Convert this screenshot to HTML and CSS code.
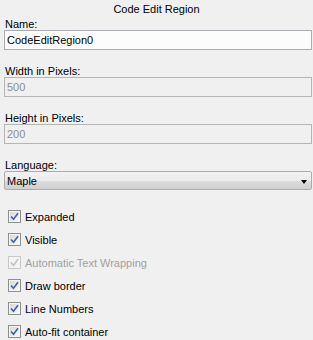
FILE: index.html
```html
<!DOCTYPE html>
<html>
<head>
<meta charset="utf-8">
<link rel="stylesheet" href="styles.css">
</head>
<body>
<div class="panel">
  <div class="title">Code Edit Region</div>
  <div class="field first">
    <div class="label">Name:</div>
    <div class="input">CodeEditRegion0</div>
  </div>
  <div class="field">
    <div class="label">Width in Pixels:</div>
    <div class="input disabled">500</div>
  </div>
  <div class="field">
    <div class="label">Height in Pixels:</div>
    <div class="input disabled">200</div>
  </div>
  <div class="field">
    <div class="label">Language:</div>
    <div class="select"><span>Maple</span><span class="arrow"></span></div>
  </div>
  <div class="checks">
    <div class="check"><span class="box"><svg viewBox="0 0 9 9" width="9" height="9"><path d="M1 4.5 L3.5 7.3 L8 1.2" fill="none" stroke="#4660a8" stroke-width="1.6"/></svg></span>Expanded</div>
    <div class="check"><span class="box"><svg viewBox="0 0 9 9" width="9" height="9"><path d="M1 4.5 L3.5 7.3 L8 1.2" fill="none" stroke="#4660a8" stroke-width="1.6"/></svg></span>Visible</div>
    <div class="check off"><span class="box"><svg viewBox="0 0 9 9" width="9" height="9"><path d="M1 4.5 L3.5 7.3 L8 1.2" fill="none" stroke="#bcbcbc" stroke-width="1.4"/></svg></span>Automatic Text Wrapping</div>
    <div class="check"><span class="box"><svg viewBox="0 0 9 9" width="9" height="9"><path d="M1 4.5 L3.5 7.3 L8 1.2" fill="none" stroke="#4660a8" stroke-width="1.6"/></svg></span>Draw border</div>
    <div class="check"><span class="box"><svg viewBox="0 0 9 9" width="9" height="9"><path d="M1 4.5 L3.5 7.3 L8 1.2" fill="none" stroke="#4660a8" stroke-width="1.6"/></svg></span>Line Numbers</div>
    <div class="check"><span class="box"><svg viewBox="0 0 9 9" width="9" height="9"><path d="M1 4.5 L3.5 7.3 L8 1.2" fill="none" stroke="#4660a8" stroke-width="1.6"/></svg></span>Auto-fit container</div>
  </div>
</div>
</body>
</html>
```
FILE: styles.css
```css
html, body {
  margin: 0;
  padding: 0;
  background: #f0f0f0;
}
.panel {
  width: 313px;
  height: 340px;
  font-family: "Liberation Sans", Arial, sans-serif;
  font-size: 11px;
  color: #000;
  display: flex;
  flex-direction: column;
  box-sizing: border-box;
  padding: 0 1px 0 4px;
  overflow: hidden;
}
.title {
  text-align: center;
  height: 18px;
  line-height: 18px;
  padding-right: 3px;
}
.field {
  display: flex;
  flex-direction: column;
  margin-top: 15px;
}
.field.first {
  margin-top: 0;
}
.label {
  height: 12px;
  line-height: 12px;
  padding-left: 1px;
}
.input {
  height: 20px;
  box-sizing: border-box;
  border: 1px solid #abadb3;
  background: #fcfcfc;
  line-height: 17px;
  padding: 1px 0 0 2px;
}
.input.disabled {
  background: #f0f0f0;
  color: #8d8d8d;
  border-color: #b5b5b5;
}
.select {
  height: 19px;
  box-sizing: border-box;
  border: 1px solid #acacac;
  border-radius: 2px;
  background: linear-gradient(#f2f2f2 0, #ebebeb 50%, #dddddd 51%, #cfcfcf 100%);
  display: flex;
  align-items: center;
  justify-content: space-between;
  padding: 1px 4px 0 2px;
}
.arrow {
  width: 0;
  height: 0;
  border-left: 3.5px solid transparent;
  border-right: 3.5px solid transparent;
  border-top: 4px solid #000;
  margin-top: 2px;
}
.checks {
  display: flex;
  flex-direction: column;
  margin-top: 15px;
  padding-left: 4px;
}
.check {
  display: flex;
  align-items: center;
  height: 23px;
}
.box {
  width: 13px;
  height: 13px;
  box-sizing: border-box;
  border: 1px solid #8e8f8f;
  box-shadow: inset 0 0 0 1px #f4f4f4;
  background: linear-gradient(135deg, #d6d6d6, #fbfbfb);
  display: flex;
  align-items: center;
  justify-content: center;
  margin-right: 4px;
}
.check.off {
  color: #a0a0a0;
}
.check.off .box {
  border-color: #c8c8c8;
  background: #f4f4f4;
}
```
